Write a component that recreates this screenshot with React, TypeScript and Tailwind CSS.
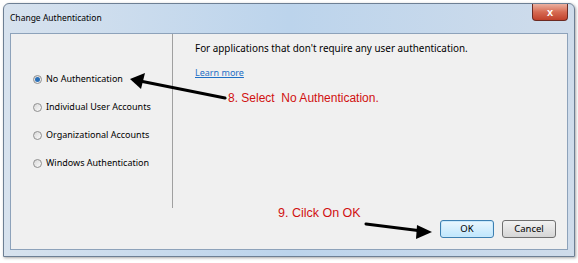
const options = [
  { label: 'No Authentication', checked: true },
  { label: 'Individual User Accounts', checked: false },
  { label: 'Organizational Accounts', checked: false },
  { label: 'Windows Authentication', checked: false },
];

function Radio({ checked }: { checked: boolean }) {
  return (
    <span className="flex h-[9px] w-[9px] shrink-0 items-center justify-center rounded-full border border-[#8f8f8f] bg-gradient-to-br from-[#d8d8d8] to-[#fbfbfb]">
      {checked && <span className="h-[5px] w-[5px] rounded-full bg-[#2a6fb8]" />}
    </span>
  );
}

export default function App() {
  return (
    <div className="relative h-[263px] w-[578px] overflow-hidden bg-white pl-[3px] pt-[3px] font-['Noto_Sans',sans-serif]">
      {/* Window frame */}
      <div className="flex h-[254px] w-[572px] flex-col rounded-t-[6px] border border-[#6d7f94] bg-gradient-to-r from-[#d7e2ee] via-[#bcd4ec] to-[#cfdceb] px-[6px] pb-[6px] shadow-[1px_1px_3px_rgba(0,0,0,0.35)]">
        {/* Title bar */}
        <div className="flex h-[29px] items-start justify-between">
          <span className="mt-[8px] whitespace-nowrap text-[8.5px] leading-[12px] text-black">Change Authentication</span>
          <div className="flex h-[17px] w-[36px] items-center justify-center rounded-b-[4px] border border-t-0 border-[#6b2a22] bg-gradient-to-b from-[#eab0a0] via-[#d66a52] to-[#c0402a] font-['Liberation_Sans',sans-serif] text-[11px] font-bold leading-none text-white">
            x
          </div>
        </div>

        {/* Client area */}
        <div className="flex flex-1 border border-[#8da2ba] bg-[#f0f0f0]">
          {/* Left: options */}
          <div className="flex w-[162px] shrink-0 flex-col">
            <div className="flex h-[174px] border-r border-[#a0a0a0]">
              <div className="flex flex-col gap-[14px] pl-[22px] pt-[38px]">
                {options.map((o) => (
                  <div key={o.label} className="flex h-[14px] items-center gap-[4px] whitespace-nowrap text-[9px] text-black">
                    <Radio checked={o.checked} />
                    <span>{o.label}</span>
                  </div>
                ))}
              </div>
            </div>
          </div>

          {/* Right */}
          <div className="flex flex-1 flex-col pl-[22px] pt-[7px]">
            <p className="whitespace-nowrap text-[9.9px] leading-[14px] text-black">For applications that don't require any user authentication.</p>
            <a className="mt-[11px] w-fit text-[9px] leading-[14px] text-[#1f6fc5] underline">Learn more</a>
            <p className="ml-[33px] mt-[11px] font-['Liberation_Sans',sans-serif] text-[12px] leading-[14px] text-[#d01010]">8. Select&nbsp; No Authentication.</p>
            <div className="flex flex-1 items-end justify-end gap-[8px] pb-[11px] pr-[11px]">
              <button className="h-[18px] w-[54px] rounded-[3px] border border-[#3c7fb1] bg-gradient-to-b from-[#eaf6fd] to-[#bee6fd] text-[9.5px] leading-none text-black shadow-[inset_0_0_0_1px_#c8e8fb]">
                OK
              </button>
              <button className="h-[18px] w-[54px] rounded-[3px] border border-[#707070] bg-gradient-to-b from-[#f2f2f2] to-[#d6d6d6] text-[9.5px] leading-none text-black">
                Cancel
              </button>
            </div>
          </div>
        </div>
      </div>

      {/* Annotations */}
      <span className="absolute left-[278px] top-[206px] whitespace-nowrap font-['Liberation_Sans',sans-serif] text-[12.5px] leading-[14px] text-[#d01010]">9. Cilck On OK</span>
      <svg className="pointer-events-none absolute left-0 top-0" width="578" height="263">
        <line x1="225" y1="98" x2="140" y2="81" stroke="#000" strokeWidth="3" strokeLinecap="round" />
        <polygon points="130,79 145,73 141,89" fill="#000" />
        <line x1="366" y1="224" x2="422" y2="231" stroke="#000" strokeWidth="3" strokeLinecap="round" />
        <polygon points="432,232 417,225 416,239" fill="#000" />
      </svg>
    </div>
  );
}
